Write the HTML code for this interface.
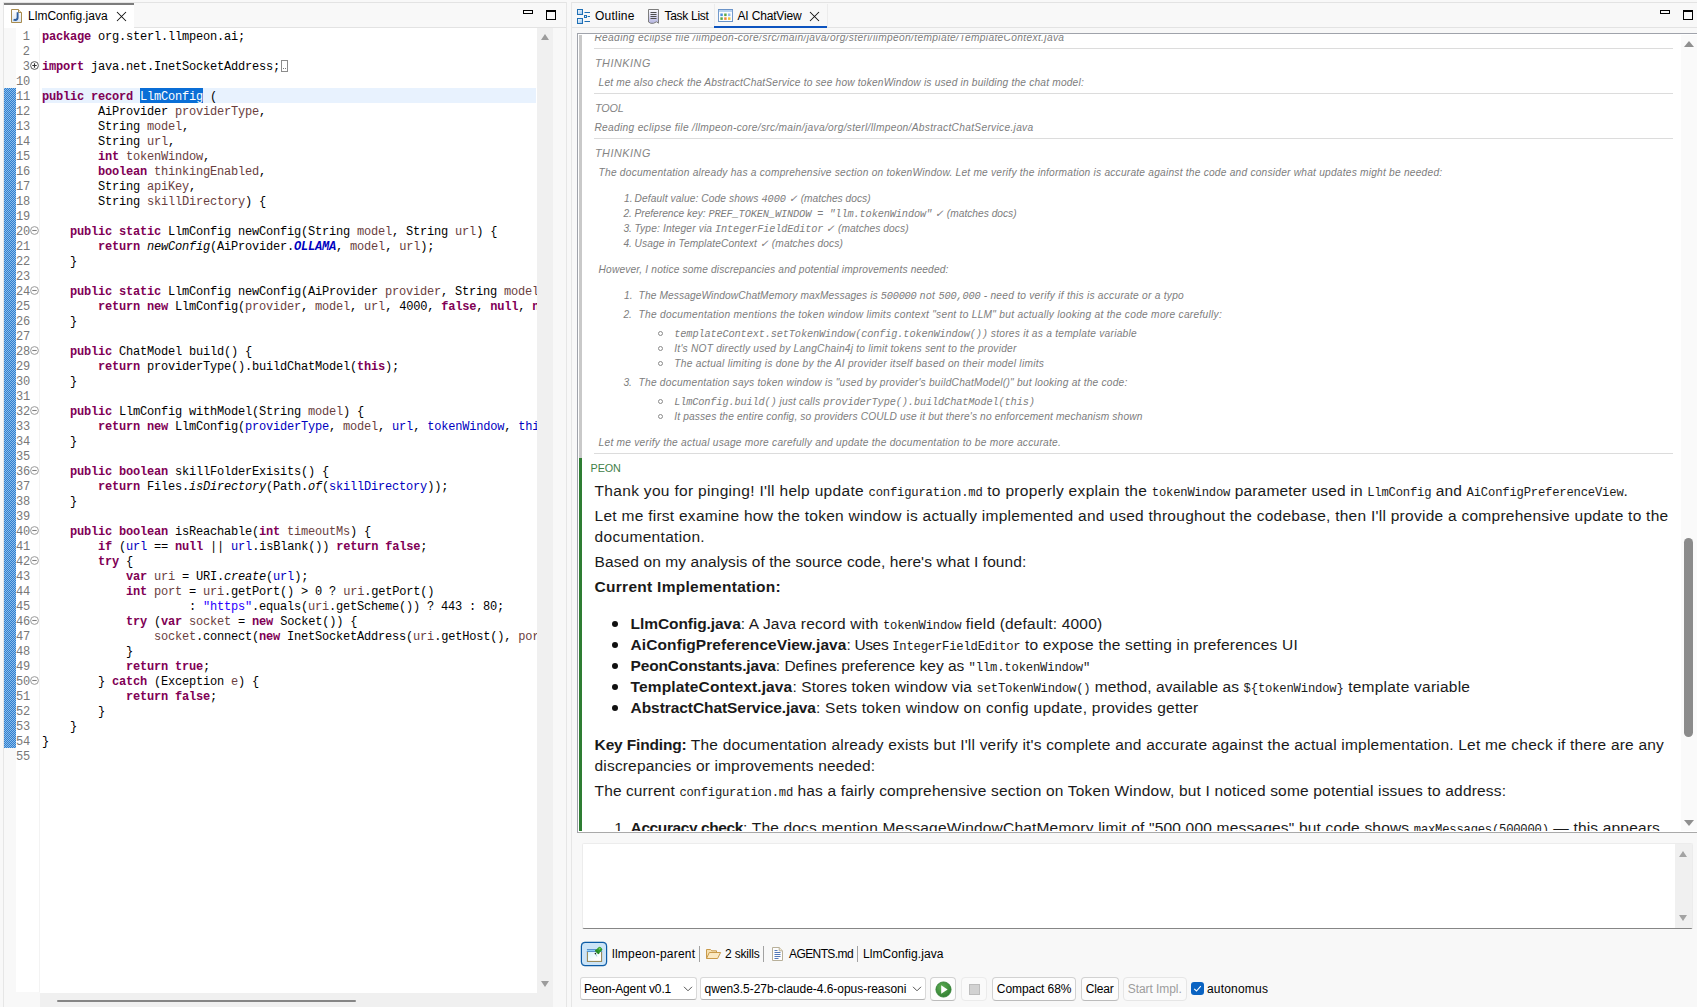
<!DOCTYPE html>
<html lang="en">
<head>
<meta charset="utf-8">
<title>LlmConfig.java - Eclipse IDE</title>
<style>
*{box-sizing:border-box;margin:0;padding:0}
html,body{width:1697px;height:1007px;overflow:hidden}
body{position:relative;background:#f8f8f8;font-family:"Liberation Sans",sans-serif;font-size:12px;color:#000}
.abs{position:absolute}
.hl{position:absolute;height:1px;background:#e3e3e3}
.vl{position:absolute;width:1px;background:#e6e6e6}
.ui{position:absolute;white-space:nowrap;font-size:12px;line-height:14px;color:#000}
/* ---- editor ---- */
#tabL{position:absolute;left:4px;top:3px;width:130px;height:25px;background:#fff;border-top:2px solid #7c7c7c}
#num{position:absolute;left:16px;top:28px;width:23px;height:964px;background:#fff}
#num .n{height:15px;line-height:15px;text-align:right;width:13.8px;color:#787878;font-family:"Liberation Mono",monospace;font-size:12px;letter-spacing:-0.2px;white-space:nowrap;padding-top:2px}
#sep{position:absolute;left:39px;top:28px;width:1px;height:964px;background:#f3f3f3}
#txt{position:absolute;left:40px;top:28px;width:497px;height:965px;background:#fff;overflow:hidden}
#txt .cl{height:15px;line-height:15px;padding:2px 0 0 2px;white-space:pre;font-family:"Liberation Mono",monospace;font-size:12px;letter-spacing:-0.2px;color:#000}
#txt .cl{position:relative}
.k{color:#7f0055;font-weight:bold}
.p{color:#6a3e3e}
.f{color:#0000c0}
.i{font-style:italic}
.s{color:#2a00ff}
.c{color:#0000c0;font-weight:bold;font-style:italic}
.sel{color:#fff}
.fbox{display:inline-block;width:7px;height:12px;border:1px solid #8c8c8c;vertical-align:-2px;margin-left:1px;position:relative}
.fbox i{position:absolute;bottom:2px;width:1px;height:1px;background:#777}
.fbox i:first-child{left:1px}.fbox i:last-child{left:3px}
.fo{position:absolute;left:29.8px}
#qd{position:absolute;left:4px;top:88px;width:12px;height:660px;background-color:#8cbce8;
 background-image:linear-gradient(45deg,#2f7fd1 25%,transparent 25%,transparent 75%,#2f7fd1 75%),linear-gradient(45deg,#2f7fd1 25%,transparent 25%,transparent 75%,#2f7fd1 75%);
 background-size:2px 2px;background-position:0 0,1px 1px}
#vs{position:absolute;left:537px;top:28px;width:16px;height:979px;background:#f0f0f0}
#hs{position:absolute;left:40px;top:993px;width:497px;height:14px;background:#f0f0f0}
.tri{position:absolute;width:0;height:0;border-left:4.5px solid transparent;border-right:4.5px solid transparent}
.tri.up{border-bottom:6px solid #9c9c9c}
.tri.dn{border-top:6px solid #9c9c9c}
/* ---- chat browser ---- */
#br{position:absolute;left:577px;top:33px;width:1120px;height:800px;border-left:1px solid #a0a3ab;border-top:1px solid #a0a3ab;border-bottom:1px solid #a9a9a9;background:#fff;overflow:hidden}
#bri{position:absolute;left:1px;top:1px;width:1118px;height:796px;overflow:hidden}
#br .ln{position:absolute;white-space:pre}
#br .th{font-size:10.2px;line-height:14px;font-style:italic;color:#7d7d7d}
#br .hd{font-size:10.8px;line-height:14px;font-style:italic;color:#858585}
#br .pn{font-size:10.8px;line-height:14px;color:#3f8048}
#br .pe{font-size:15.5px;line-height:20px;color:#1a1a1a}
#br .pe b{font-weight:bold}
#br .th code{font-family:"Liberation Mono",monospace;font-size:10.3px;letter-spacing:-0.14px;font-style:italic}
#br .pe code{font-family:"Liberation Mono",monospace;font-size:12.2px;letter-spacing:-0.24px}
#br .hr{position:absolute;left:15px;width:1079px;height:1px;background:#dcdcdc}
#br .bar{position:absolute;left:0;width:3px}
#bs{position:absolute;left:1102px;top:0;width:16px;height:796px;background:#fafafa}
.bul{position:absolute;width:6px;height:6px;border-radius:50%;background:#111}
.cir{position:absolute;width:5px;height:5px;border-radius:50%;border:1px solid #8a8a8a}
/* ---- bottom ---- */
#ta{position:absolute;left:582px;top:843px;width:1111px;height:86px;background:#fff;border:1px solid #ececec;border-bottom:1px solid #868686;border-radius:2px}
#tas{position:absolute;left:1675px;top:844px;width:17px;height:84px;background:#f0f0f0}
.btn{position:absolute;top:977px;height:24px;background:#fdfdfd;border:1px solid #d2d2d2;border-bottom-color:#bcbcbc;border-radius:4px}
.cmb{position:absolute;top:977px;height:23px;background:#fff;border:1px solid #d9d9d9;border-bottom-color:#b4b4b4;border-radius:3px}
.sp{position:absolute;top:946px;width:1px;height:16px;background:#a2a2a2}
</style>
</head>
<body>
<!-- frame lines -->
<div class="hl" style="left:3px;top:2px;width:564px"></div>
<div class="hl" style="left:571px;top:2px;width:1126px"></div>
<div class="vl" style="left:3px;top:2px;height:1005px"></div>
<div class="vl" style="left:566px;top:2px;height:1005px"></div>
<div class="vl" style="left:571px;top:2px;height:1005px"></div>
<div class="hl" style="left:134px;top:27px;width:432px"></div>
<div class="hl" style="left:572px;top:27px;width:1125px"></div>

<!-- left tab -->
<div id="tabL"></div>
<svg class="abs" style="left:10px;top:8px" width="14" height="16" viewBox="0 0 14 16">
 <defs><linearGradient id="jg" x1="0" y1="0" x2="0" y2="1"><stop offset="0" stop-color="#ffffff"/><stop offset="1" stop-color="#dbe6f3"/></linearGradient></defs>
 <path d="M1.5 1.5H8.5L11.5 4.5V14.5H1.5Z" fill="url(#jg)" stroke="#a88c4f" stroke-width="1"/>
 <path d="M8.5 1.5V4.5H11.5" fill="#f3e6c3" stroke="#a88c4f" stroke-width="1"/>
 <path d="M7.6 4.3V9.6C7.6 11.2 6.7 12 5.3 12C4.6 12 4 11.8 3.6 11.5" fill="none" stroke="#2d5e9e" stroke-width="1.9"/>
</svg>
<div class="ui" style="left:28px;top:9px;letter-spacing:0.023px">LlmConfig.java</div>
<svg class="abs" style="left:116px;top:11px" width="11" height="11" viewBox="0 0 11 11"><path d="M1 1L10 10M10 1L1 10" stroke="#111" stroke-width="1.05" fill="none"/></svg>
<!-- min/max left -->
<div class="abs" style="left:523px;top:10px;width:10px;height:4px;border:1px solid #000"></div>
<div class="abs" style="left:546px;top:10px;width:10px;height:10px;border:1px solid #000;border-top-width:2px"></div>

<!-- editor -->
<div id="num"><div class="n">1</div><div class="n">2</div><div class="n">3</div><div class="n">10</div><div class="n">11</div><div class="n">12</div><div class="n">13</div><div class="n">14</div><div class="n">15</div><div class="n">16</div><div class="n">17</div><div class="n">18</div><div class="n">19</div><div class="n">20</div><div class="n">21</div><div class="n">22</div><div class="n">23</div><div class="n">24</div><div class="n">25</div><div class="n">26</div><div class="n">27</div><div class="n">28</div><div class="n">29</div><div class="n">30</div><div class="n">31</div><div class="n">32</div><div class="n">33</div><div class="n">34</div><div class="n">35</div><div class="n">36</div><div class="n">37</div><div class="n">38</div><div class="n">39</div><div class="n">40</div><div class="n">41</div><div class="n">42</div><div class="n">43</div><div class="n">44</div><div class="n">45</div><div class="n">46</div><div class="n">47</div><div class="n">48</div><div class="n">49</div><div class="n">50</div><div class="n">51</div><div class="n">52</div><div class="n">53</div><div class="n">54</div><div class="n">55</div></div>
<div id="sep"></div>
<div id="txt"><div class="abs" style="left:2px;top:60px;width:494px;height:15px;background:#e8f2fe"></div><div class="abs" style="left:100px;top:60px;width:63px;height:15px;background:#0a6ed6"></div><div class="cl"><span class="k">package</span> org.sterl.llmpeon.ai;</div><div class="cl">&nbsp;</div><div class="cl"><span class="k">import</span> java.net.InetSocketAddress;<span class="fbox"><i></i><i></i></span></div><div class="cl">&nbsp;</div><div class="cl cur"><span class="k">public record</span> <span class="sel">LlmConfig</span> (</div><div class="cl">        AiProvider <span class="p">providerType</span>,</div><div class="cl">        String <span class="p">model</span>,</div><div class="cl">        String <span class="p">url</span>,</div><div class="cl">        <span class="k">int</span> <span class="p">tokenWindow</span>,</div><div class="cl">        <span class="k">boolean</span> <span class="p">thinkingEnabled</span>,</div><div class="cl">        String <span class="p">apiKey</span>,</div><div class="cl">        String <span class="p">skillDirectory</span>) {</div><div class="cl">&nbsp;</div><div class="cl">    <span class="k">public static</span> LlmConfig newConfig(String <span class="p">model</span>, String <span class="p">url</span>) {</div><div class="cl">        <span class="k">return</span> <span class="i">newConfig</span>(AiProvider.<span class="c">OLLAMA</span>, <span class="p">model</span>, <span class="p">url</span>);</div><div class="cl">    }</div><div class="cl">&nbsp;</div><div class="cl">    <span class="k">public static</span> LlmConfig newConfig(AiProvider <span class="p">provider</span>, String <span class="p">model</span>, String <span class="p">url</span>) {</div><div class="cl">        <span class="k">return new</span> LlmConfig(<span class="p">provider</span>, <span class="p">model</span>, <span class="p">url</span>, 4000, <span class="k">false</span>, <span class="k">null</span>, <span class="k">null</span>);</div><div class="cl">    }</div><div class="cl">&nbsp;</div><div class="cl">    <span class="k">public</span> ChatModel build() {</div><div class="cl">        <span class="k">return</span> providerType().buildChatModel(<span class="k">this</span>);</div><div class="cl">    }</div><div class="cl">&nbsp;</div><div class="cl">    <span class="k">public</span> LlmConfig withModel(String <span class="p">model</span>) {</div><div class="cl">        <span class="k">return new</span> LlmConfig(<span class="f">providerType</span>, <span class="p">model</span>, <span class="f">url</span>, <span class="f">tokenWindow</span>, <span class="f">thinkingEnabled</span>, </div><div class="cl">    }</div><div class="cl">&nbsp;</div><div class="cl">    <span class="k">public boolean</span> skillFolderExisits() {</div><div class="cl">        <span class="k">return</span> Files.<span class="i">isDirectory</span>(Path.<span class="i">of</span>(<span class="f">skillDirectory</span>));</div><div class="cl">    }</div><div class="cl">&nbsp;</div><div class="cl">    <span class="k">public boolean</span> isReachable(<span class="k">int</span> <span class="p">timeoutMs</span>) {</div><div class="cl">        <span class="k">if</span> (<span class="f">url</span> == <span class="k">null</span> || <span class="f">url</span>.isBlank()) <span class="k">return false</span>;</div><div class="cl">        <span class="k">try</span> {</div><div class="cl">            <span class="k">var</span> <span class="p">uri</span> = URI.<span class="i">create</span>(<span class="f">url</span>);</div><div class="cl">            <span class="k">int</span> <span class="p">port</span> = <span class="p">uri</span>.getPort() &gt; 0 ? <span class="p">uri</span>.getPort()</div><div class="cl">                     : <span class="s">"https"</span>.equals(<span class="p">uri</span>.getScheme()) ? 443 : 80;</div><div class="cl">            <span class="k">try</span> (<span class="k">var</span> <span class="p">socket</span> = <span class="k">new</span> Socket()) {</div><div class="cl">                <span class="p">socket</span>.connect(<span class="k">new</span> InetSocketAddress(<span class="p">uri</span>.getHost(), <span class="p">port</span>), timeoutMs);</div><div class="cl">            }</div><div class="cl">            <span class="k">return true</span>;</div><div class="cl">        } <span class="k">catch</span> (Exception <span class="p">e</span>) {</div><div class="cl">            <span class="k">return false</span>;</div><div class="cl">        }</div><div class="cl">    }</div><div class="cl">}</div><div class="cl">&nbsp;</div></div>
<div id="qd"></div>
<div class="abs" style="left:0;top:28px;width:0;height:0"><svg class="fo" style="top:33px" width="9" height="9" viewBox="0 0 9 9"><circle cx="4.5" cy="4.5" r="3.9" fill="#fff" stroke="#5a5a5a" stroke-width="1"/><path d="M2.3 4.5H6.7M4.5 2.3V6.7" stroke="#333" stroke-width="1.1"/></svg><svg class="fo" style="top:198px" width="9" height="9" viewBox="0 0 9 9"><circle cx="4.5" cy="4.5" r="3.9" fill="#fff" stroke="#9a9a9a" stroke-width="1"/><path d="M2.3 4.5H6.7" stroke="#808080" stroke-width="1.1"/></svg><svg class="fo" style="top:258px" width="9" height="9" viewBox="0 0 9 9"><circle cx="4.5" cy="4.5" r="3.9" fill="#fff" stroke="#9a9a9a" stroke-width="1"/><path d="M2.3 4.5H6.7" stroke="#808080" stroke-width="1.1"/></svg><svg class="fo" style="top:318px" width="9" height="9" viewBox="0 0 9 9"><circle cx="4.5" cy="4.5" r="3.9" fill="#fff" stroke="#9a9a9a" stroke-width="1"/><path d="M2.3 4.5H6.7" stroke="#808080" stroke-width="1.1"/></svg><svg class="fo" style="top:378px" width="9" height="9" viewBox="0 0 9 9"><circle cx="4.5" cy="4.5" r="3.9" fill="#fff" stroke="#9a9a9a" stroke-width="1"/><path d="M2.3 4.5H6.7" stroke="#808080" stroke-width="1.1"/></svg><svg class="fo" style="top:438px" width="9" height="9" viewBox="0 0 9 9"><circle cx="4.5" cy="4.5" r="3.9" fill="#fff" stroke="#9a9a9a" stroke-width="1"/><path d="M2.3 4.5H6.7" stroke="#808080" stroke-width="1.1"/></svg><svg class="fo" style="top:498px" width="9" height="9" viewBox="0 0 9 9"><circle cx="4.5" cy="4.5" r="3.9" fill="#fff" stroke="#9a9a9a" stroke-width="1"/><path d="M2.3 4.5H6.7" stroke="#808080" stroke-width="1.1"/></svg><svg class="fo" style="top:528px" width="9" height="9" viewBox="0 0 9 9"><circle cx="4.5" cy="4.5" r="3.9" fill="#fff" stroke="#9a9a9a" stroke-width="1"/><path d="M2.3 4.5H6.7" stroke="#808080" stroke-width="1.1"/></svg><svg class="fo" style="top:588px" width="9" height="9" viewBox="0 0 9 9"><circle cx="4.5" cy="4.5" r="3.9" fill="#fff" stroke="#9a9a9a" stroke-width="1"/><path d="M2.3 4.5H6.7" stroke="#808080" stroke-width="1.1"/></svg><svg class="fo" style="top:648px" width="9" height="9" viewBox="0 0 9 9"><circle cx="4.5" cy="4.5" r="3.9" fill="#fff" stroke="#9a9a9a" stroke-width="1"/><path d="M2.3 4.5H6.7" stroke="#808080" stroke-width="1.1"/></svg></div>
<div id="vs"><div class="tri up" style="left:3.5px;top:6px"></div><div class="tri dn" style="left:3.5px;top:953px"></div></div>
<div id="hs"><div class="abs" style="left:17px;top:7px;width:299px;height:2px;background:#868686;border-radius:1px"></div></div>

<!-- right tabs -->
<svg class="abs" style="left:576px;top:8px" width="16" height="17" viewBox="0 0 16 17">
 <defs><linearGradient id="og" x1="0" y1="0" x2="1" y2="1"><stop offset="0" stop-color="#ffffff"/><stop offset="1" stop-color="#8fc0ee"/></linearGradient></defs>
 <rect x="1.5" y="1.5" width="5" height="5" fill="url(#og)" stroke="#1f6fb4" stroke-width="1"/>
 <rect x="1.5" y="10.5" width="5" height="5" fill="url(#og)" stroke="#1f6fb4" stroke-width="1"/>
 <path d="M8.5 4.5H14M11.6 8.5H14M8.5 13.5H14" stroke="#1f6fb4" stroke-width="1"/>
 <rect x="8.5" y="7.5" width="2" height="2" fill="#dcecfa" stroke="#1f6fb4" stroke-width="1"/>
</svg>
<div class="ui" style="left:595px;top:9px;letter-spacing:0.238px">Outline</div>
<svg class="abs" style="left:647px;top:8px" width="13" height="17" viewBox="0 0 13 17">
 <defs><linearGradient id="tg" x1="0" y1="0" x2="0" y2="1"><stop offset="0" stop-color="#fdfdff"/><stop offset="1" stop-color="#b4b4e0"/></linearGradient></defs>
 <path d="M1.5 1.5H11.5V15.2L9.5 13.8L6.5 15.3L3.8 15.3L1.5 14Z" fill="url(#tg)" stroke="#7d7d7d" stroke-width="1"/>
 <path d="M3.5 4.5H9.5M3.5 6.5H9.5M3.5 8.5H9.5M3.5 10.5H9.5" stroke="#4e4e4e" stroke-width="1"/>
</svg>
<div class="ui" style="left:664.5px;top:9px;letter-spacing:-0.288px">Task List</div>
<div class="vl" style="left:714px;top:4px;height:23px;background:#ececec"></div>
<div class="vl" style="left:827px;top:4px;height:23px;background:#ececec"></div>
<div class="abs" style="left:714px;top:26px;width:113px;height:2px;background:#0c53bf"></div>
<svg class="abs" style="left:718px;top:9px" width="15" height="13" viewBox="0 0 16 13" preserveAspectRatio="none">
 <rect x="0.5" y="0.5" width="15" height="12" fill="#fbfdff" stroke="#6a93c8" stroke-width="1"/>
 <rect x="1" y="1" width="14" height="2" fill="#b9d3f0"/>
 <rect x="2.5" y="4.5" width="2.6" height="2.6" fill="#4d90e0"/><rect x="6.6" y="4.5" width="2.6" height="2.6" fill="#5aa746"/><rect x="10.7" y="4.5" width="2.6" height="2.6" fill="#8fbdf0"/>
 <rect x="2.5" y="8.3" width="2.6" height="2.6" fill="#5aa746"/><rect x="6.6" y="8.3" width="2.6" height="2.6" fill="#f08a3c"/><rect x="10.7" y="8.3" width="2.6" height="2.6" fill="#ecc63c"/>
</svg>
<div class="ui" style="left:737.5px;top:9px;letter-spacing:-0.174px">AI ChatView</div>
<svg class="abs" style="left:809px;top:11px" width="11" height="11" viewBox="0 0 11 11"><path d="M1 1L10 10M10 1L1 10" stroke="#111" stroke-width="1.05" fill="none"/></svg>
<div class="abs" style="left:1660px;top:10px;width:10px;height:4px;border:1px solid #000"></div>
<div class="abs" style="left:1683px;top:10px;width:10px;height:10px;border:1px solid #000;border-top-width:2px"></div>

<!-- chat browser -->
<div id="br"><div id="bri">
 <div class="bar" style="top:0;height:423px;background:#c9c9c9"></div>
 <div class="bar" style="top:423px;height:374px;background:#2e7d32"></div>
 <div class="hr" style="top:13px"></div>
 <div class="hr" style="top:58px"></div>
 <div class="hr" style="top:103px"></div>
 <div class="hr" style="top:418px"></div>
<div class="ln th" style="left:15.4px;top:-3.53px"><span style="letter-spacing:0.346px">Reading eclipse file /llmpeon-core/src/main/java/org/sterl/llmpeon/template/TemplateContext.java</span></div>
<div class="ln hd" style="left:15.9px;top:21.26px"><span style="letter-spacing:0.551px">THINKING</span></div>
<div class="ln th" style="left:19.6px;top:41.47px"><span style="letter-spacing:0.186px">Let me also check the AbstractChatService to see how tokenWindow is used in building the chat model:</span></div>
<div class="ln hd" style="left:15.9px;top:66.26px"><span style="letter-spacing:-0.076px">TOOL</span></div>
<div class="ln th" style="left:15.4px;top:86.47px"><span style="letter-spacing:0.308px">Reading eclipse file /llmpeon-core/src/main/java/org/sterl/llmpeon/AbstractChatService.java</span></div>
<div class="ln hd" style="left:15.9px;top:111.26px"><span style="letter-spacing:0.551px">THINKING</span></div>
<div class="ln th" style="left:19.6px;top:131.47px"><span style="letter-spacing:0.222px">The documentation already has a comprehensive section on tokenWindow. Let me verify the information is accurate against the code and consider what updates might be needed:</span></div>
<div class="ln th" style="left:45.0px;top:157.47px">1.</div>
<div class="ln th" style="left:55.5px;top:157.47px"><span style="letter-spacing:0.114px">Default value: Code shows </span><code style="letter-spacing:-0.058px">4000</code><span style="letter-spacing:0.017px"> ✓ (matches docs)</span></div>
<div class="ln th" style="left:44.4px;top:172.47px">2.</div>
<div class="ln th" style="left:55.5px;top:172.47px"><span style="letter-spacing:-0.018px">Preference key: </span><code style="letter-spacing:-0.133px">PREF_TOKEN_WINDOW = "llm.tokenWindow"</code><span style="letter-spacing:0.011px"> ✓ (matches docs)</span></div>
<div class="ln th" style="left:44.4px;top:187.47px">3.</div>
<div class="ln th" style="left:55.5px;top:187.47px"><span style="letter-spacing:0.147px">Type: Integer via </span><code style="letter-spacing:-0.174px">IntegerFieldEditor</code><span style="letter-spacing:0.064px"> ✓ (matches docs)</span></div>
<div class="ln th" style="left:44.4px;top:202.47px">4.</div>
<div class="ln th" style="left:55.5px;top:202.47px"><span style="letter-spacing:0.110px">Usage in TemplateContext ✓ (matches docs)</span></div>
<div class="ln th" style="left:19.6px;top:228.47px"><span style="letter-spacing:0.160px">However, I notice some discrepancies and potential improvements needed:</span></div>
<div class="ln th" style="left:45.0px;top:254.47px">1.</div>
<div class="ln th" style="left:59.6px;top:254.47px"><span style="letter-spacing:0.102px">The MessageWindowChatMemory maxMessages is </span><code style="letter-spacing:-0.198px">500000</code><span style="letter-spacing:0.434px"> not </span><code style="letter-spacing:-0.180px">500,000</code><span style="letter-spacing:0.256px"> - need to verify if this is accurate or a typo</span></div>
<div class="ln th" style="left:44.4px;top:273.47px">2.</div>
<div class="ln th" style="left:59.6px;top:273.47px"><span style="letter-spacing:0.274px">The documentation mentions the token window limits context "sent to LLM" but actually looking at the code more carefully:</span></div>
<div class="ln th" style="left:95.3px;top:292.47px"><code style="letter-spacing:-0.151px">templateContext.setTokenWindow(config.tokenWindow())</code><span style="letter-spacing:0.248px"> stores it as a template variable</span></div>
<div class="ln th" style="left:95.3px;top:307.47px"><span style="letter-spacing:0.222px">It's NOT directly used by LangChain4j to limit tokens sent to the provider</span></div>
<div class="ln th" style="left:95.3px;top:322.47px"><span style="letter-spacing:0.272px">The actual limiting is done by the AI provider itself based on their model limits</span></div>
<div class="ln th" style="left:44.4px;top:341.47px">3.</div>
<div class="ln th" style="left:59.6px;top:341.47px"><span style="letter-spacing:0.220px">The documentation says token window is "used by provider's buildChatModel()" but looking at the code:</span></div>
<div class="ln th" style="left:95.3px;top:360.47px"><code style="letter-spacing:-0.168px">LlmConfig.build()</code><span style="letter-spacing:0.164px"> just calls </span><code style="letter-spacing:-0.134px">providerType().buildChatModel(this)</code></div>
<div class="ln th" style="left:95.3px;top:375.47px"><span style="letter-spacing:0.149px">It passes the entire config, so providers COULD use it but there's no enforcement mechanism shown</span></div>
<div class="ln th" style="left:19.6px;top:401.47px"><span style="letter-spacing:0.242px">Let me verify the actual usage more carefully and update the documentation to be more accurate.</span></div>
<div class="ln pn" style="left:11.6px;top:426.26px"><span style="letter-spacing:-0.152px">PEON</span></div>
<div class="ln pe" style="left:15.6px;top:445.63px"><span style="letter-spacing:0.313px">Thank you for pinging! I'll help update </span><code style="letter-spacing:-0.189px">configuration.md</code><span style="letter-spacing:0.323px"> to properly explain the </span><code style="letter-spacing:-0.187px">tokenWindow</code><span style="letter-spacing:0.182px"> parameter used in </span><code style="letter-spacing:-0.192px">LlmConfig</code><span style="letter-spacing:0.163px"> and </span><code style="letter-spacing:-0.182px">AiConfigPreferenceView</code><span style="letter-spacing:0.287px">.</span></div>
<div class="ln pe" style="left:15.6px;top:470.63px"><span style="letter-spacing:0.263px">Let me first examine how the token window is actually implemented and used throughout the codebase, then I'll provide a comprehensive update to the</span></div>
<div class="ln pe" style="left:15.6px;top:491.63px"><span style="letter-spacing:0.314px">documentation.</span></div>
<div class="ln pe" style="left:15.6px;top:516.63px"><span style="letter-spacing:0.095px">Based on my analysis of the source code, here's what I found:</span></div>
<div class="ln pe" style="left:15.6px;top:541.63px"><b style="letter-spacing:0.279px">Current Implementation:</b></div>
<div class="ln pe" style="left:51.6px;top:578.63px"><b style="letter-spacing:-0.072px">LlmConfig.java</b><span style="letter-spacing:0.171px">: A Java record with </span><code style="letter-spacing:-0.187px">tokenWindow</code><span style="letter-spacing:0.177px"> field (default: 4000)</span></div>
<div class="ln pe" style="left:51.6px;top:599.63px"><b style="letter-spacing:0.084px">AiConfigPreferenceView.java</b><span style="letter-spacing:-0.362px">: Uses </span><code style="letter-spacing:-0.192px">IntegerFieldEditor</code><span style="letter-spacing:0.195px"> to expose the setting in preferences UI</span></div>
<div class="ln pe" style="left:51.6px;top:620.63px"><b style="letter-spacing:-0.164px">PeonConstants.java</b><span style="letter-spacing:-0.007px">: Defines preference key as </span><code style="letter-spacing:-0.162px">"llm.tokenWindow"</code></div>
<div class="ln pe" style="left:51.6px;top:641.63px"><b style="letter-spacing:0.136px">TemplateContext.java</b><span style="letter-spacing:0.159px">: Stores token window via </span><code style="letter-spacing:-0.202px">setTokenWindow()</code><span style="letter-spacing:0.109px"> method, available as </span><code style="letter-spacing:-0.165px">${tokenWindow}</code><span style="letter-spacing:0.231px"> template variable</span></div>
<div class="ln pe" style="left:51.6px;top:662.63px"><b style="letter-spacing:-0.070px">AbstractChatService.java</b><span style="letter-spacing:0.277px">: Sets token window on config update, provides getter</span></div>
<div class="ln pe" style="left:15.6px;top:699.63px"><b style="letter-spacing:-0.155px">Key Finding:</b><span style="letter-spacing:0.201px"> The documentation already exists but I'll verify it's complete and accurate against the actual implementation. Let me check if there are any</span></div>
<div class="ln pe" style="left:15.6px;top:720.63px"><span style="letter-spacing:0.158px">discrepancies or improvements needed:</span></div>
<div class="ln pe" style="left:15.6px;top:745.63px"><span style="letter-spacing:0.103px">The current </span><code style="letter-spacing:-0.214px">configuration.md</code><span style="letter-spacing:0.182px"> has a fairly comprehensive section on Token Window, but I noticed some potential issues to address:</span></div>
<div class="ln pe" style="left:35.2px;top:782.63px">1.</div>
<div class="ln pe" style="left:51.6px;top:782.63px"><b style="letter-spacing:-0.404px">Accuracy check</b><span style="letter-spacing:0.192px">: The docs mention MessageWindowChatMemory limit of "500,000 messages" but code shows </span><code style="letter-spacing:-0.209px">maxMessages(500000)</code><span style="letter-spacing:0.176px"> — this appears</span></div>
 <div class="cir" style="left:79px;top:296.2px"></div>
 <div class="cir" style="left:79px;top:311.2px"></div>
 <div class="cir" style="left:79px;top:326.2px"></div>
 <div class="cir" style="left:79px;top:364.2px"></div>
 <div class="cir" style="left:79px;top:379.2px"></div>
 <div class="bul" style="left:33px;top:586px"></div>
 <div class="bul" style="left:33px;top:607px"></div>
 <div class="bul" style="left:33px;top:628px"></div>
 <div class="bul" style="left:33px;top:649px"></div>
 <div class="bul" style="left:33px;top:670px"></div>
 <div id="bs">
  <div class="tri up" style="left:3px;top:5.5px;border-bottom-color:#8f8f8f;border-left-width:5px;border-right-width:5px;border-bottom-width:6.5px"></div>
  <div class="tri dn" style="left:3px;top:785px;border-top-color:#8f8f8f;border-left-width:5px;border-right-width:5px;border-top-width:6.5px"></div>
  <div class="abs" style="left:3px;top:503px;width:9px;height:199px;border-radius:4.5px;background:#8b8b8b"></div>
 </div>
</div></div>

<!-- textarea -->
<div id="ta"></div>
<div id="tas"><div class="tri up" style="left:4px;top:7px;border-bottom-color:#a3a3a3"></div><div class="tri dn" style="left:4px;top:71px;border-top-color:#a3a3a3"></div></div>

<!-- context toolbar -->
<div class="abs" style="left:581px;top:942px;width:26px;height:24px;background:#cce4f7;border:1px solid #0a5aa5;border-radius:4px;box-shadow:0 0 0 0.2px #0a5aa5"></div>
<svg class="abs" style="left:586px;top:945px" width="18" height="18" viewBox="0 0 18 18">
 <defs><linearGradient id="wg" x1="0" y1="0" x2="1" y2="1"><stop offset="0" stop-color="#d4f3fb"/><stop offset="0.7" stop-color="#ffffff"/></linearGradient>
 <linearGradient id="wt" x1="0" y1="0" x2="0" y2="1"><stop offset="0" stop-color="#3f72b8"/><stop offset="0.5" stop-color="#8ccff4"/><stop offset="1" stop-color="#3f74bd"/></linearGradient></defs>
 <rect x="1.4" y="6.5" width="14.2" height="9.9" fill="url(#wg)" stroke="#94804c" stroke-width="1"/>
 <rect x="0.9" y="4" width="15.2" height="3" fill="url(#wt)"/>
 <path d="M9.6 8.6L10.8 11.4" stroke="#9cc4d2" stroke-width="0.9"/>
 <circle cx="9.4" cy="8.6" r="0.8" fill="#222"/>
 <g transform="rotate(45 12.6 5.4)"><rect x="10.4" y="1.7" width="4.6" height="6.6" rx="1.5" fill="#2f9a2c"/><rect x="11.3" y="2.3" width="1.6" height="2.4" rx="0.8" fill="#7ccf5a"/><rect x="10" y="6.6" width="5.4" height="1.8" rx="0.9" fill="#268a26"/></g>
</svg>
<div class="ui" style="left:612px;top:947px;letter-spacing:0.232px">llmpeon-parent</div>
<div class="sp" style="left:699px"></div>
<svg class="abs" style="left:705px;top:947px" width="17" height="13" viewBox="0 0 17 13">
 <path d="M1.5 11.5V2.5H5.5L6.8 3.8H11.5V5.5" fill="#f6e0b0" stroke="#c99a4a" stroke-width="1"/>
 <path d="M1.5 11.5L4.3 5.5H15.6L12.6 11.5Z" fill="#fbe9c2" stroke="#c99a4a" stroke-width="1"/>
</svg>
<div class="ui" style="left:725px;top:947px;letter-spacing:-0.164px">2 skills</div>
<div class="sp" style="left:763px"></div>
<svg class="abs" style="left:771px;top:946px" width="13" height="16" viewBox="0 0 13 16">
 <path d="M1.5 1.5H8.2L11.5 4.8V14.5H1.5Z" fill="#fdfdfd" stroke="#b8b09a" stroke-width="1"/>
 <path d="M8.2 1.5V4.8H11.5" fill="#f2ead2" stroke="#b8b09a" stroke-width="1"/>
 <path d="M3.5 6.5H9.5M3.5 8.5H9.5M3.5 10.5H9.5M3.5 12.5H7.5M3.5 4.5H6.5" stroke="#5277b8" stroke-width="1"/>
</svg>
<div class="ui" style="left:789px;top:947px;letter-spacing:-0.595px">AGENTS.md</div>
<div class="sp" style="left:857px"></div>
<div class="ui" style="left:863px;top:947px;letter-spacing:0.080px">LlmConfig.java</div>

<!-- bottom row -->
<div class="cmb" style="left:580px;width:117px"></div>
<div class="ui" style="left:584px;top:982px;letter-spacing:-0.154px">Peon-Agent v0.1</div>
<svg class="abs" style="left:683px;top:986px" width="10" height="6" viewBox="0 0 10 6"><path d="M1 0.8L5 4.8L9 0.8" stroke="#555" stroke-width="1" fill="none"/></svg>
<div class="cmb" style="left:700px;width:226px"></div>
<div class="ui" style="left:704.5px;top:982px;letter-spacing:-0.026px">qwen3.5-27b-claude-4.6-opus-reasoni</div>
<svg class="abs" style="left:912px;top:986px" width="10" height="6" viewBox="0 0 10 6"><path d="M1 0.8L5 4.8L9 0.8" stroke="#555" stroke-width="1" fill="none"/></svg>
<div class="btn" style="left:930px;width:26px"></div>
<svg class="abs" style="left:935px;top:981px" width="17" height="17" viewBox="0 0 17 17">
 <defs><radialGradient id="pg" cx="0.4" cy="0.35" r="0.75"><stop offset="0" stop-color="#5fae55"/><stop offset="1" stop-color="#2c7a2e"/></radialGradient></defs>
 <circle cx="8.5" cy="8.5" r="7.6" fill="url(#pg)" stroke="#2f7d31" stroke-width="0.8"/>
 <path d="M6.2 4.2L12.6 8.5L6.2 12.8Z" fill="#fff"/>
</svg>
<div class="btn" style="left:961px;width:26px;border-color:#ebebeb;background:#fafafa"></div>
<div class="abs" style="left:969px;top:984px;width:11px;height:11px;background:#d2d2d2;border:1px solid #bdbdbd"></div>
<div class="btn" style="left:992px;width:84px"></div>
<div class="ui" style="left:996.8px;top:982px;letter-spacing:-0.070px">Compact 68%</div>
<div class="btn" style="left:1081px;width:38px"></div>
<div class="ui" style="left:1085.8px;top:982px;letter-spacing:-0.197px">Clear</div>
<div class="btn" style="left:1123px;width:64px;border-color:#e6e6e6;background:#fafafa"></div>
<div class="ui" style="left:1127.8px;top:982px;color:#9d9d9d;letter-spacing:-0.072px">Start Impl.</div>
<div class="abs" style="left:1191px;top:982px;width:13px;height:13px;background:#0a63c2;border-radius:3px"></div>
<svg class="abs" style="left:1191px;top:982px" width="13" height="13" viewBox="0 0 13 13"><path d="M3.2 6.8L5.5 9L9.8 4.2" stroke="#fff" stroke-width="1.1" fill="none"/></svg>
<div class="ui" style="left:1206.9px;top:982px;letter-spacing:0.203px">autonomus</div>
</body>
</html>
